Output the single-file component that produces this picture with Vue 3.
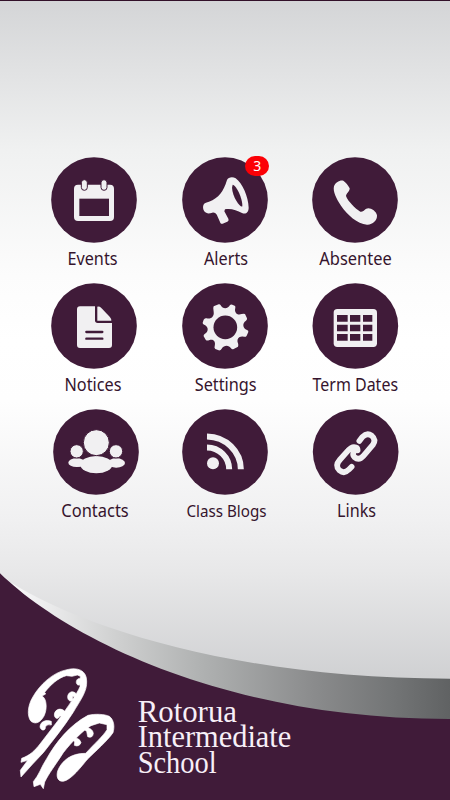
<script setup>
const tiles = [
  { id: 'events', label: 'Events', box: '33 36 258 258', cx: 162, cy: 165, width: 50, shift: -1.5 },
  { id: 'alerts', label: 'Alerts', box: '36 36 258 258', cx: 165, cy: 165, width: 44, shift: 1 },
  { id: 'absentee', label: 'Absentee', box: '36 36 258 258', cx: 165, cy: 165, width: 72.5, shift: 0.5 },
  { id: 'notices', label: 'Notices', box: '33 24 258 258', cx: 162, cy: 153, width: 57, shift: -1 },
  { id: 'settings', label: 'Settings', box: '36 24 258 258', cx: 165, cy: 153, width: 62, shift: 0.7 },
  { id: 'dates', label: 'Term Dates', box: '36 24 258 258', cx: 166, cy: 153, width: 85.5, shift: 0.3 },
  { id: 'contacts', label: 'Contacts', box: '33 28 258 258', cx: 168, cy: 157, width: 67.5, shift: 1 },
  { id: 'blogs', label: 'Class Blogs', box: '36 28 258 258', cx: 165, cy: 157, width: 80, shift: 1.5 },
  { id: 'links', label: 'Links', box: '37 28 258 258', cx: 168, cy: 157, width: 39, shift: 1.5 }
]
const alertCount = 3
</script>

<template>
  <main class="screen">
    <nav class="grid">
      <a v-for="t in tiles" :key="t.id" class="tile">
        <svg class="icon" :viewBox="t.box">
          <circle class="disc" :cx="t.cx" :cy="t.cy" r="128.5" />
          <g v-if="t.id === 'events'">
            <rect class="fg" x="102" y="119" width="120" height="109" rx="12" />
            <rect class="disc" x="118" y="161" width="89" height="52" />
            <rect class="fg rim" x="124" y="104" width="18" height="32" rx="9" />
            <rect class="fg rim" x="183" y="104" width="18" height="32" rx="9" />
          </g>
          <g v-else-if="t.id === 'alerts'">
            <path class="fg" d="M171 105C175 96 188 94 197 100C217 115 235 154 236 188C236 202 227 209 216 204C200 195 181 189 165 193L163 199L175 221C177 226 175 229 170 231L158 236C153 237 151 235 150 231L141 211C138 205 134 202 127 203C119 205 112 207 106 202C99 196 97 184 102 177C105 173 110 172 117 170C147 159 160 140 171 105Z" />
            <path class="disc" d="M188 119C199 120 218 161 217 184C213 190 188 160 186 128Z" />
          </g>
          <path v-else-if="t.id === 'absentee'" class="fg" d="M102 124C105 112 121 104 130 107C137 111 145 122 149 130C150 139 139 145 138 153C143 168 166 191 181 200C190 203 195 190 205 190C215 190 229 200 231 211C232 227 217 240 201 239C172 236 142 210 123 182C109 162 98 139 102 124Z" />
          <g v-else-if="t.id === 'notices'">
            <path class="fg" d="M120 94H165V136Q165 144 173 144H216V210Q216 219 207 219H120Q111 219 111 210V103Q111 94 120 94Z" />
            <path class="fg" d="M172 95Q179 94 184 99L209 125Q215 132 214 137H172Z" />
            <path class="rule" d="M139 171H187M139 191H187" />
          </g>
          <g v-else-if="t.id === 'settings'">
            <path class="fg" d="M131 94L146 88Q150 87 152 91C158 103 175 102 180 90Q183 87 187 89L194 92Q197 94 196 98C192 112 201 122 215 117Q222 115 225 117L231 130Q232 134 228 137C216 144 218 160 231 165Q236 167 235 171L230 182Q227 187 222 185C207 181 199 192 204 205Q206 211 204 215L191 222Q186 224 183 220C177 210 163 209 155 221Q152 227 146 226L136 222Q132 219 134 214C138 200 130 191 117 196Q110 198 107 194L101 184Q100 180 104 177C116 170 116 156 104 150Q97 147 98 143L101 134Q104 128 110 130C125 133 133 123 131 110Q128 99 131 94Z" />
            <circle class="disc" cx="166" cy="157" r="35.5" />
          </g>
          <g v-else-if="t.id === 'dates'">
            <rect class="fg" x="101" y="102" width="130" height="114" rx="11" />
            <path class="disc" d="M111 120h32v20h-32zM150 120h31v20h-31zM189 120h28v20h-28zM111 149h32v20h-32zM150 149h31v20h-31zM189 149h28v20h-28zM111 177h32v20h-32zM150 177h31v20h-31zM189 177h28v20h-28z" />
          </g>
          <g v-else-if="t.id === 'contacts'">
            <ellipse class="fg" cx="110" cy="189" rx="25" ry="13" />
            <ellipse class="fg" cx="229" cy="190" rx="26" ry="14" />
            <ellipse class="fg" cx="169" cy="195" rx="48" ry="26" />
            <path class="fg" d="M109 177L134 184L127 200L109 201ZM229 177L205 184L212 200L229 203Z" />
            <circle class="fg rim" cx="169" cy="129" r="39" />
            <circle class="fg rim" cx="110" cy="155" r="20" />
            <circle class="fg rim" cx="228" cy="155" r="20" />
          </g>
          <g v-else-if="t.id === 'blogs'">
            <circle class="fg" cx="129" cy="191" r="18" />
            <path class="arc" d="M111 143.500A67 66 0 0 1 177.500 209M111 110.500A103 99 0 0 1 212.500 209" />
          </g>
          <path v-else class="chain" d="M179 124L188 112Q202 98 216 108Q230 120 220 135L192 168Q178 184 164 172Q158 165 162 158M174 152Q174 142 163 142Q154 142 145 153L120 181Q105 198 119 212Q134 224 147 210L156 201" />
        </svg>
        <svg class="label" viewBox="0 0 130 24">
          <text :class="{ compact: t.id === 'blogs' }" :x="65 + t.shift" y="17.500" :textLength="t.width" lengthAdjust="spacingAndGlyphs">{{ t.label }}</text>
        </svg>
        <span v-if="t.id === 'alerts'" class="badge">{{ alertCount }}</span>
      </a>
    </nav>

    <footer class="footer">
      <svg class="brand" viewBox="0 0 1350 720">
        <defs>
          <linearGradient id="silver" x1="0" x2="1350" y1="0" y2="0" gradientUnits="userSpaceOnUse">
            <stop offset="0" stop-color="#fff" />
            <stop offset="0.08" stop-color="#f0f0f1" />
            <stop offset="0.26" stop-color="#cfd0d0" />
            <stop offset="0.45" stop-color="#afb1b1" />
            <stop offset="0.7" stop-color="#8a8b8c" />
            <stop offset="0.88" stop-color="#727475" />
            <stop offset="1" stop-color="#606263" />
          </linearGradient>
        </defs>
        <path fill="url(#silver)" d="M0 40L30 66C250 205 720 356 1350 356V500H500Z" />
        <path class="disc" d="M0 40C200 235 680 478 1350 477V720H0Z" />
        <g class="fern" transform="translate(0 270)">
          <path d="M93 214C80 198 83 166 99 140C119 105 158 67 201 59C231 51 260 60 260 93C262 124 241 151 219 188C190 233 158 272 130 308L98 342L63 381L61 361L83 331L63 337L65 325C92 315 104 302 120 282L173 213C205 168 230 133 240 110L241 79L232 75L216 79L199 77C175 83 151 105 134 127L137 132L126 138C141 146 142 178 132 198C121 218 107 224 93 214Z" />
          <path d="M100 395C118 374 124 350 140 326C168 277 208 226 264 196C285 191 313 192 328 199C343 210 344 232 339 248C322 273 285 305 263 327C244 349 215 389 190 394C174 395 168 381 173 363C184 334 212 309 257 310C283 281 309 259 321 239L321 224L298 219L273 227C250 240 214 277 190 308C167 344 146 371 134 396L130 416L121 403L102 410Z" />
          <path d="M246 87C235 82 228 89 229 98C231 107 238 107 243 102L240 119L256 108ZM229 132C219 119 203 127 203 141C203 153 214 157 219 149L217 140L224 139L218 170L241 148ZM199 191C188 169 163 176 163 195C164 207 176 209 179 198L190 198L178 220L202 209ZM154 214C138 208 121 214 120 231C123 244 138 243 136 230Q143 221 154 225ZM249 237L260 244L263 260Q278 266 280 250Q278 235 256 231ZM217 268L224 276L223 286Q237 292 243 278Q240 266 227 264Z" />
        </g>
        <g class="name">
          <text x="413" y="485" textLength="298" lengthAdjust="spacingAndGlyphs">Rotorua</text>
          <text x="413" y="560" textLength="461" lengthAdjust="spacingAndGlyphs">Intermediate</text>
          <text x="413" y="638" textLength="237" lengthAdjust="spacingAndGlyphs">School</text>
        </g>
      </svg>
    </footer>
  </main>
</template>

<style>
body { margin: 0; }
</style>

<style scoped>
.screen {
  box-sizing: border-box;
  width: 450px;
  height: 800px;
  display: flex;
  flex-direction: column;
  justify-content: space-between;
  overflow: hidden;
  border-top: 1px solid #321029;
  background: linear-gradient(#d4d5d7 0, #f0f1f1 150px, #fcfcfc 275px, #fff 340px, #fefefe 400px, #f0f0f1 520px, #e8e8e9 570px, #cecfd1 685px);
}
.grid {
  display: grid;
  grid-template-columns: repeat(3, 130.6px);
  grid-auto-rows: 126.1px;
  padding: 156.2px 0 0 28.7px;
}
.tile {
  position: relative;
  display: flex;
  flex-direction: column;
  align-items: center;
}
.icon { width: 86px; height: 86px; overflow: visible; }
.label { width: 130px; height: 24px; margin-top: 3.4px; }
.label text {
  font: 17.3px "Noto Sans", "Open Sans", sans-serif;
  fill: #35142d;
  text-anchor: middle;
}
.label .compact { font-size: 16.5px; }
.disc { fill: #401b39; }
.fg { fill: #f1f0f2; }
.rim { stroke: #401b39; stroke-width: 3; }
.rule { stroke: #401b39; stroke-width: 7; stroke-linecap: round; }
.arc { fill: none; stroke: #f1f0f2; stroke-width: 18; }
.chain { fill: none; stroke: #f1f0f2; stroke-width: 17; stroke-linecap: round; stroke-linejoin: round; }
.badge {
  position: absolute;
  top: -1px;
  left: 86px;
  width: 24px;
  height: 20px;
  border-radius: 10px;
  background: #fb0006;
  color: #fff;
  font: 14px/20px "Noto Sans", sans-serif;
  text-align: center;
}
.footer { height: 240px; }
.brand { display: block; width: 450px; height: 240px; }
.fern { fill: #fff; stroke: #fff; stroke-width: 2; stroke-linejoin: round; }
.name text { font: 92px "Liberation Serif", serif; fill: #f7eff7; }
</style>
